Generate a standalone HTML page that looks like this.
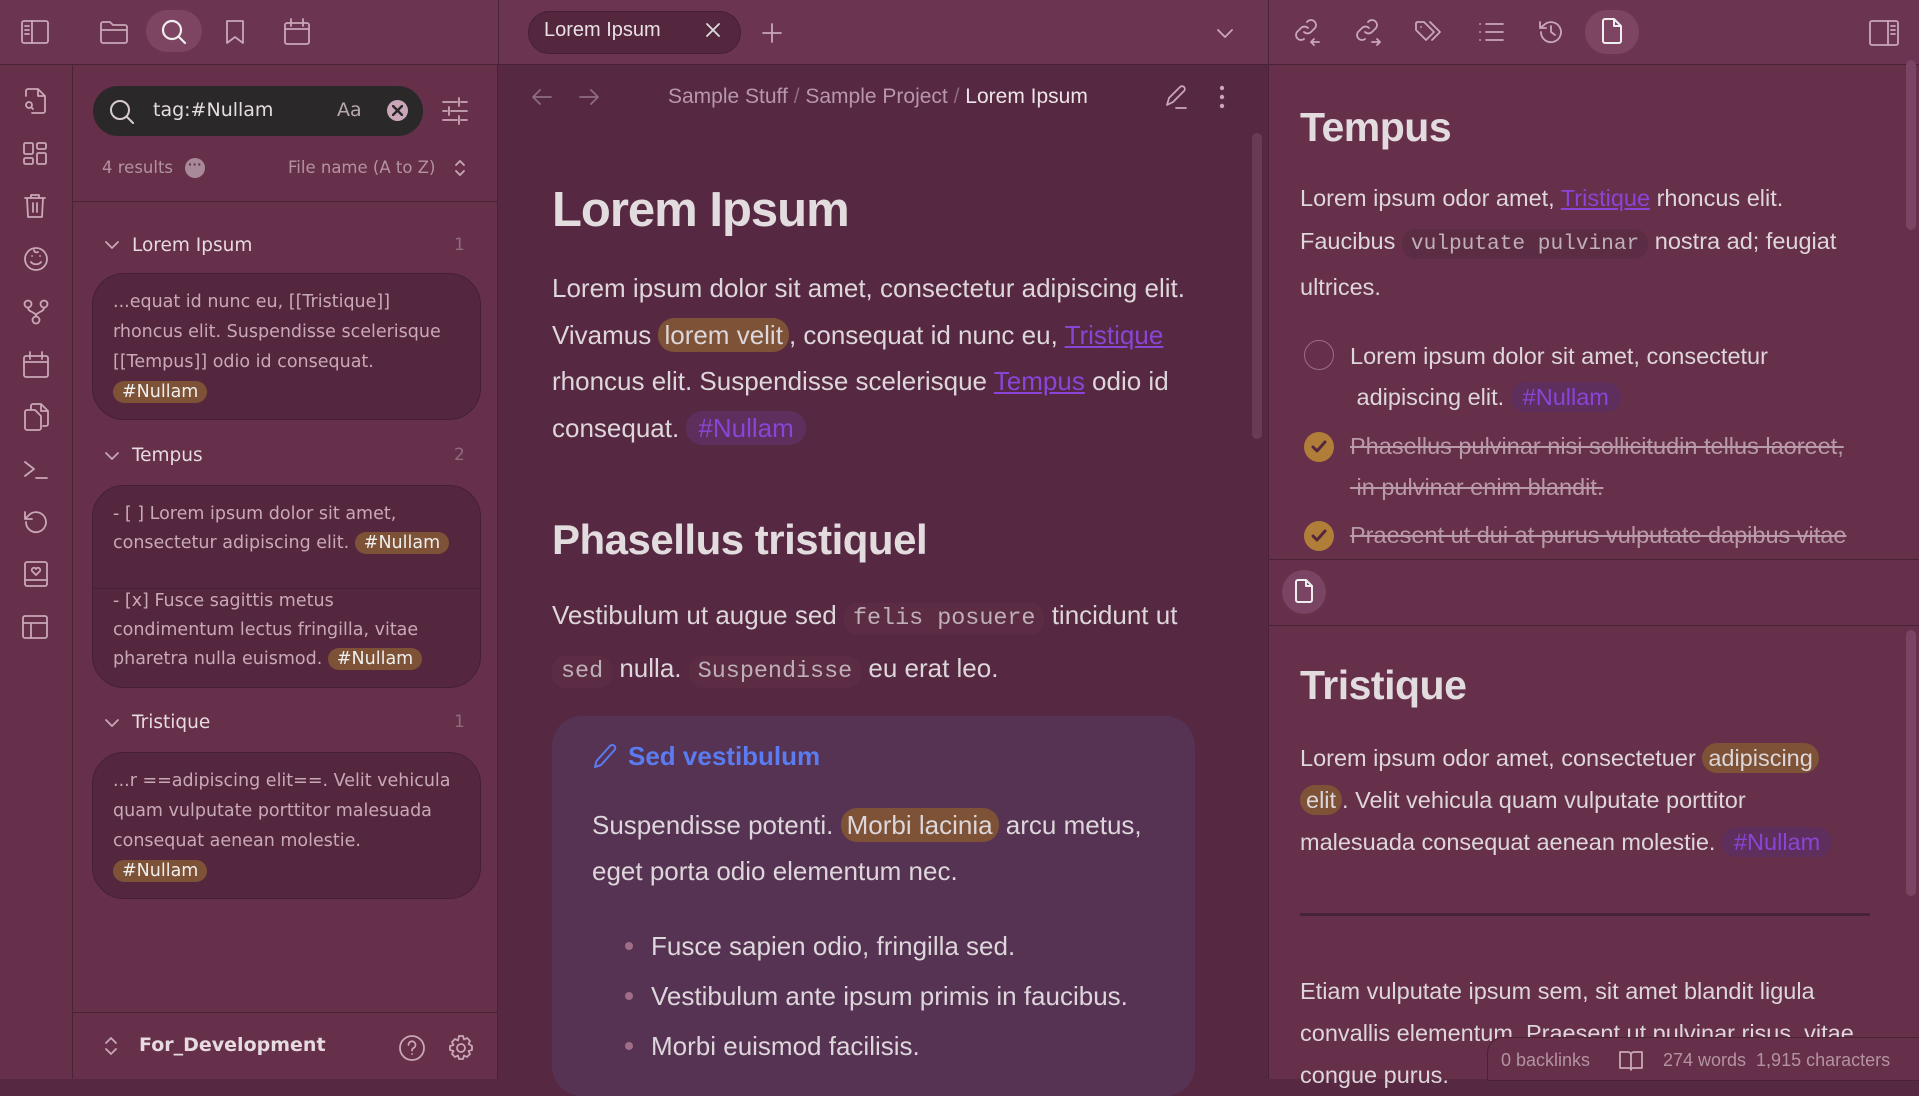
<!DOCTYPE html>
<html><head><meta charset="utf-8"><style>
*{box-sizing:border-box;margin:0;padding:0}
body{width:1919px;height:1079px;overflow:hidden;background:#562841;font-family:"Liberation Sans",sans-serif;color:#ddd6da;position:relative}
.a{position:absolute;white-space:nowrap}
svg{position:absolute;fill:none;stroke:#c9a7b8;stroke-width:1.8;stroke-linecap:round;stroke-linejoin:round}
.sb{font-family:"DejaVu Sans",sans-serif}
.tag{background:#7d5236;color:#eee;border-radius:14px;padding:1px 9px}
.ptag{background:#5e2e5c;color:#8b45d6;border-radius:16px;padding:2px 12px}
.hl{background:#7d5236;border-radius:16px;padding:2px 6px}
.lnk{color:#8b45d6;text-decoration:underline}
.code{font-family:"Liberation Mono",monospace;background:#5c2c44;color:#bfb0b8;border-radius:14px;padding:3px 9px;font-size:0.9em}
.card{position:absolute;left:92px;width:389px;background:#55273f;border:1.5px solid #452034;border-radius:32px}
.ct{position:absolute;left:20px;font-family:"DejaVu Sans",sans-serif;font-size:17.5px;color:#c8a9b8;line-height:30px;white-space:nowrap}
.s{text-decoration:line-through;color:#b89aa8}
</style></head><body>
<div class="a" style="left:0;top:0;width:1919px;height:65px;background:#6b3450;border-bottom:1px solid #4a2236"></div>
<div class="a" style="left:0;top:65px;width:73px;height:1014px;background:#662f4a;border-right:1px solid #4a2236"></div>
<div class="a" style="left:73px;top:65px;width:425px;height:1014px;background:#662f4a;border-right:1px solid #4a2236"></div>
<div class="a" style="left:498px;top:0;width:1px;height:65px;background:#4a2236"></div>
<div class="a" style="left:1268px;top:0;width:1px;height:65px;background:#4a2236"></div>
<div class="a" style="left:1268px;top:65px;width:651px;height:1014px;background:#662f4a;border-left:1px solid #4a2236"></div>

<svg style="left:21px;top:20px" width="28" height="24" viewBox="0 0 28 24"><rect x="1" y="1" width="26" height="22" rx="2"/><path d="M11 1v22M4 6h4M4 10h4M4 14h4"/></svg>
<svg style="left:100px;top:20px" width="28" height="24" viewBox="0 0 28 24"><path d="M1 4a2 2 0 0 1 2-2h7l3 3h12a2 2 0 0 1 2 2v14a2 2 0 0 1-2 2H3a2 2 0 0 1-2-2zM1 10h26"/></svg>
<div class="a" style="left:146px;top:10px;width:56px;height:42px;border-radius:21px;background:#7d4562"></div>
<svg style="left:160px;top:18px;stroke:#eee;stroke-width:2.2" width="28" height="28" viewBox="0 0 28 28"><circle cx="12" cy="12" r="9"/><path d="M19 19l6 6"/></svg>
<svg style="left:225px;top:19px" width="20" height="26" viewBox="0 0 20 26"><path d="M2 2h16v22l-8-6-8 6z"/></svg>
<svg style="left:284px;top:18px" width="26" height="28" viewBox="0 0 26 28"><rect x="1" y="5" width="24" height="21" rx="2"/><path d="M1 11h24M7 1v7M19 1v7"/></svg>

<svg style="left:23px;top:88px" width="24" height="26" viewBox="0 0 24 26"><path d="M3 8V3a2 2 0 0 1 2-2h10l7 7v15a2 2 0 0 1-2 2H9M15 1v7h7"/><circle cx="6" cy="17" r="3"/><path d="M8 19l2 2"/></svg>
<svg style="left:23px;top:142px" width="24" height="24" viewBox="0 0 24 24"><rect x="1" y="1" width="9" height="11" rx="1.5"/><rect x="14" y="1" width="9" height="6" rx="1.5"/><rect x="1" y="16" width="9" height="6" rx="1.5"/><rect x="14" y="11" width="9" height="11" rx="1.5"/></svg>
<svg style="left:24px;top:193px" width="22" height="26" viewBox="0 0 22 26"><path d="M1 5h20M7 5V2h8v3M3 5l1 19h14l1-19M9 10v9M13 10v9"/></svg>
<svg style="left:23px;top:246px" width="26" height="26" viewBox="0 0 26 26"><circle cx="13" cy="13" r="11"/><path d="M8 16c2 3 8 3 10 0M9 10h.1M17 10h.1M11 4c0 2 2 3 4 2"/></svg>
<svg style="left:23px;top:299px" width="26" height="26" viewBox="0 0 26 26"><circle cx="5" cy="5" r="3.5"/><circle cx="21" cy="5" r="3.5"/><circle cx="13" cy="21" r="3.5"/><path d="M5 9c0 4 8 4 8 8M21 9c0 4-8 4-8 8"/></svg>
<svg style="left:23px;top:351px" width="26" height="28" viewBox="0 0 26 28"><rect x="1" y="5" width="24" height="21" rx="2"/><path d="M1 11h24M7 1v7M19 1v7"/></svg>
<svg style="left:23px;top:403px" width="26" height="28" viewBox="0 0 26 28"><path d="M8 6V3a2 2 0 0 1 2-2h8l7 7v13a2 2 0 0 1-2 2h-3M18 1v7h7"/><path d="M2 9a2 2 0 0 1 2-2h8l6 6v12a2 2 0 0 1-2 2H4a2 2 0 0 1-2-2z"/></svg>
<svg style="left:23px;top:459px" width="26" height="22" viewBox="0 0 26 22"><path d="M2 3l9 7-9 7M13 19h11"/></svg>
<svg style="left:22px;top:509px" width="28" height="26" viewBox="0 0 28 26"><path d="M4 13a10 10 0 1 0 3-7L3 10M3 3v7h7"/></svg>
<svg style="left:24px;top:561px" width="24" height="26" viewBox="0 0 24 26"><rect x="1" y="1" width="22" height="24" rx="2"/><path d="M1 19h22M12 14l-4-4a2 2 0 0 1 4-2 2 2 0 0 1 4 2z"/></svg>
<svg style="left:22px;top:615px" width="26" height="24" viewBox="0 0 26 24"><rect x="1" y="1" width="24" height="22" rx="2"/><path d="M1 8h24M9 8v15"/></svg>

<div class="a" style="left:93px;top:86px;width:330px;height:50px;border-radius:25px;background:#2b2829"></div>
<svg style="left:108px;top:98px;stroke:#d8ccd2;stroke-width:2" width="28" height="28" viewBox="0 0 28 28"><circle cx="12" cy="12" r="9"/><path d="M19 19l6 6"/></svg>
<div class="a sb" style="left:153px;top:99px;font-size:19px;color:#e4dde0">tag:#Nullam</div>
<div class="a sb" style="left:337px;top:99px;font-size:19px;color:#b8a8b0">Aa</div>
<div class="a" style="left:387px;top:100px;width:21px;height:21px;border-radius:50%;background:#c9a7b8"></div>
<svg style="left:392px;top:105px;stroke:#2b2829;stroke-width:2.4" width="11" height="11" viewBox="0 0 11 11"><path d="M1 1l9 9M10 1l-9 9"/></svg>
<svg style="left:442px;top:97px" width="26" height="28" viewBox="0 0 26 28"><path d="M1 5h14M19 5h6M17 1v8M1 14h4M9 14h16M7 10v8M1 23h14M19 23h6M17 19v8"/></svg>
<div class="a sb" style="left:102px;top:158px;font-size:16.5px;color:#b393a3">4 results</div>
<div class="a" style="left:185px;top:158px;width:20px;height:20px;border-radius:50%;background:#a8899a;color:#662f4a;font-size:14px;line-height:12px;text-align:center;font-weight:bold">···</div>
<div class="a sb" style="left:288px;top:158px;font-size:16.5px;color:#b393a3">File name (A to Z)</div>
<svg style="left:454px;top:159px" width="12" height="18" viewBox="0 0 12 18"><path d="M2 6l4-4 4 4M2 12l4 4 4-4"/></svg>
<div class="a" style="left:73px;top:201px;width:425px;height:1px;background:#4a2236"></div>

<svg style="left:104px;top:240px" width="16" height="10" viewBox="0 0 16 10"><path d="M2 2l6 6 6-6"/></svg>
<div class="a sb" style="left:132px;top:235px;font-size:18.5px;color:#e6dce0">Lorem Ipsum</div>
<div class="a sb" style="left:454px;top:235px;font-size:17px;color:#8e6c7e">1</div>
<div class="card" style="top:273px;height:147px">
<div class="ct" style="top:13px">...equat id nunc eu, [[Tristique]]<br>rhoncus elit. Suspendisse scelerisque<br>[[Tempus]] odio id consequat.<br><span class="tag">#Nullam</span></div></div>

<svg style="left:104px;top:451px" width="16" height="10" viewBox="0 0 16 10"><path d="M2 2l6 6 6-6"/></svg>
<div class="a sb" style="left:132px;top:445px;font-size:18.5px;color:#e6dce0">Tempus</div>
<div class="a sb" style="left:454px;top:445px;font-size:17px;color:#8e6c7e">2</div>
<div class="card" style="top:485px;height:203px">
<div class="ct" style="top:14px;line-height:29px">- [ ] Lorem ipsum dolor sit amet,<br>consectetur adipiscing elit. <span class="tag">#Nullam</span></div>
<div class="a" style="left:0;top:102px;width:386px;height:1px;background:#452034"></div>
<div class="ct" style="top:101px;line-height:29px">- [x] Fusce sagittis metus<br>condimentum lectus fringilla, vitae<br>pharetra nulla euismod. <span class="tag">#Nullam</span></div></div>

<svg style="left:104px;top:718px" width="16" height="10" viewBox="0 0 16 10"><path d="M2 2l6 6 6-6"/></svg>
<div class="a sb" style="left:132px;top:712px;font-size:18.5px;color:#e6dce0">Tristique</div>
<div class="a sb" style="left:454px;top:712px;font-size:17px;color:#8e6c7e">1</div>
<div class="card" style="top:752px;height:147px">
<div class="ct" style="top:13px">...r ==adipiscing elit==. Velit vehicula<br>quam vulputate porttitor malesuada<br>consequat aenean molestie.<br><span class="tag">#Nullam</span></div></div>

<div class="a" style="left:73px;top:1012px;width:425px;height:1px;background:#4a2236"></div>
<svg style="left:104px;top:1035px" width="14" height="22" viewBox="0 0 14 22"><path d="M2 8l5-5 5 5M2 14l5 5 5-5"/></svg>
<div class="a sb" style="left:139px;top:1034px;font-size:19px;font-weight:bold;color:#e6dce0">For_Development</div>
<svg style="left:398px;top:1034px" width="28" height="28" viewBox="0 0 28 28"><circle cx="14" cy="14" r="12"/><path d="M10.5 11a3.5 3.5 0 1 1 5 3c-1 .6-1.5 1.2-1.5 2.5M14 20h.1"/></svg>
<svg style="left:447px;top:1034px" width="28" height="28" viewBox="0 0 28 28"><circle cx="14" cy="14" r="4"/><path d="M12 2h4l1 3.5 3-1.5 3 3-1.5 3L25 12v4l-3.5 1 1.5 3-3 3-3-1.5L16 25h-4l-1-3.5-3 1.5-3-3 1.5-3L3 16v-4l3.5-1L5 8l3-3 3 1.5z"/></svg>

<div class="a" style="left:528px;top:11px;width:213px;height:43px;border-radius:22px;background:#55273f;border:1.5px solid #452034"></div>
<div class="a" style="left:544px;top:19px;font-size:20px;color:#e8e0e4">Lorem Ipsum</div>
<svg style="left:705px;top:22px;stroke:#ddd" width="16" height="16" viewBox="0 0 16 16"><path d="M2 2l12 12M14 2L2 14"/></svg>
<svg style="left:762px;top:23px" width="20" height="20" viewBox="0 0 20 20"><path d="M10 1v18M1 10h18"/></svg>
<svg style="left:1216px;top:28px" width="18" height="10" viewBox="0 0 18 10"><path d="M2 2l7 7 7-7"/></svg>

<svg style="left:531px;top:88px;stroke:#8e6c7e" width="22" height="18" viewBox="0 0 22 18"><path d="M20 9H2M9 2L2 9l7 7"/></svg>
<svg style="left:578px;top:88px;stroke:#8e6c7e" width="22" height="18" viewBox="0 0 22 18"><path d="M2 9h18M13 2l7 7-7 7"/></svg>
<div class="a" style="left:668px;top:85px;font-size:21px;color:#b898a8">Sample Stuff <span style="color:#8e6c7e">/</span> Sample Project <span style="color:#8e6c7e">/</span> <span style="color:#ece4e8">Lorem Ipsum</span></div>
<svg style="left:1164px;top:84px" width="24" height="26" viewBox="0 0 24 26"><path d="M3 21l2-7L16 3a2.5 2.5 0 0 1 4 4L9 18zM12 24h10"/></svg>
<svg style="left:1218px;top:84px;fill:#c9a7b8;stroke:none" width="8" height="26" viewBox="0 0 8 26"><circle cx="4" cy="4" r="2.2"/><circle cx="4" cy="13" r="2.2"/><circle cx="4" cy="22" r="2.2"/></svg>
<div class="a" style="left:1252px;top:133px;width:10px;height:306px;border-radius:5px;background:#6b3a54"></div>

<div class="a" style="left:552px;top:182px;font-size:49px;font-weight:bold;color:#e2dcdf;letter-spacing:-1px">Lorem Ipsum</div>
<div class="a" style="left:552px;top:265px;font-size:26px;line-height:46.5px">Lorem ipsum dolor sit amet, consectetur adipiscing elit.<br>Vivamus <span class="hl">lorem velit</span>, consequat id nunc eu, <span class="lnk">Tristique</span><br>rhoncus elit. Suspendisse scelerisque <span class="lnk">Tempus</span> odio id<br>consequat. <span class="ptag">#Nullam</span></div>
<div class="a" style="left:552px;top:516px;font-size:42px;font-weight:bold;color:#e2dcdf;letter-spacing:-0.5px">Phasellus tristiquel</div>
<div class="a" style="left:552px;top:591px;font-size:26px;line-height:49px">Vestibulum ut augue sed <span class="code">felis posuere</span> tincidunt ut<br><span class="code">sed</span> nulla. <span class="code">Suspendisse</span> eu erat leo.</div>

<div class="a" style="left:552px;top:716px;width:643px;height:380px;border-radius:30px;background:#563253"></div>
<svg style="left:592px;top:742px;stroke:#5a7cf0;stroke-width:2" width="26" height="28" viewBox="0 0 26 28"><path d="M3 25l1.5-6L18 4a3 3 0 0 1 4.5 4L9 23z"/></svg>
<div class="a" style="left:628px;top:741px;font-size:26px;font-weight:bold;color:#5a7cf0">Sed vestibulum</div>
<div class="a" style="left:592px;top:802px;font-size:26px;line-height:46px">Suspendisse potenti. <span class="hl">Morbi lacinia</span> arcu metus,<br>eget porta odio elementum nec.</div>
<div class="a" style="left:625px;top:942px;width:8px;height:8px;border-radius:50%;background:#a06d86"></div>
<div class="a" style="left:625px;top:992px;width:8px;height:8px;border-radius:50%;background:#a06d86"></div>
<div class="a" style="left:625px;top:1042px;width:8px;height:8px;border-radius:50%;background:#a06d86"></div>
<div class="a" style="left:651px;top:921px;font-size:26px;line-height:50px">Fusce sapien odio, fringilla sed.<br>Vestibulum ante ipsum primis in faucibus.<br>Morbi euismod facilisis.</div>

<svg style="left:1293px;top:18px" width="28" height="28" viewBox="0 0 28 28"><path d="M11 14a5 5 0 0 0 7 0l4-4a5 5 0 0 0-7-7l-1 1M15 10a5 5 0 0 0-7 0l-4 4a5 5 0 0 0 7 7M18 24h8M21 21l-3 3 3 3"/></svg>
<svg style="left:1354px;top:18px" width="28" height="28" viewBox="0 0 28 28"><path d="M11 14a5 5 0 0 0 7 0l4-4a5 5 0 0 0-7-7l-1 1M15 10a5 5 0 0 0-7 0l-4 4a5 5 0 0 0 7 7M18 24h8M23 21l3 3-3 3"/></svg>
<svg style="left:1414px;top:20px" width="30" height="24" viewBox="0 0 30 24"><path d="M2 3v7l10 10 8-8L10 2H3zM16 2l10 10-8 8M7 7h.1"/></svg>
<svg style="left:1478px;top:21px" width="26" height="22" viewBox="0 0 26 22"><path d="M8 3h17M8 11h17M8 19h17M2 3h.1M2 11h.1M2 19h.1"/></svg>
<svg style="left:1537px;top:18px" width="28" height="28" viewBox="0 0 28 28"><path d="M4 14a10 10 0 1 0 3-7L3 10M3 4v6h6M14 8v6l4 3"/></svg>
<div class="a" style="left:1585px;top:10px;width:54px;height:44px;border-radius:22px;background:#7d4562"></div>
<svg style="left:1601px;top:17px;stroke:#f0f0f0;stroke-width:2" width="22" height="28" viewBox="0 0 22 28"><path d="M2 4a2 2 0 0 1 2-2h9l7 7v15a2 2 0 0 1-2 2H4a2 2 0 0 1-2-2zM13 2v7h7"/></svg>
<svg style="left:1869px;top:20px" width="30" height="26" viewBox="0 0 30 26"><rect x="1" y="1" width="28" height="24" rx="2"/><path d="M19 1v24M22 6h4M22 10h4M22 14h4"/></svg>

<div class="a" style="left:1906px;top:60px;width:10px;height:170px;border-radius:5px;background:#7a4562"></div>
<div class="a" style="left:1300px;top:104px;font-size:41px;font-weight:bold;color:#e2dcdf;letter-spacing:-0.5px">Tempus</div>
<div class="a" style="left:1300px;top:177px;font-size:23.5px;line-height:43px">Lorem ipsum odor amet, <span class="lnk">Tristique</span> rhoncus elit.<br>Faucibus <span class="code">vulputate pulvinar</span> nostra ad; feugiat<br>ultrices.</div>
<div class="a" style="left:1304px;top:340px;width:30px;height:30px;border-radius:50%;border:1.5px solid #9a6f86"></div>
<div class="a" style="left:1350px;top:336px;font-size:23.5px;line-height:41px">Lorem ipsum dolor sit amet, consectetur<br>&nbsp;adipiscing elit. <span class="ptag">#Nullam</span></div>
<div class="a" style="left:1304px;top:432px;width:30px;height:30px;border-radius:50%;background:#b07e38"></div>
<svg style="left:1311px;top:440px;stroke:#55273f;stroke-width:3" width="16" height="14" viewBox="0 0 16 14"><path d="M2 7l4 4 8-9"/></svg>
<div class="a s" style="left:1350px;top:426px;font-size:23.5px;line-height:41px">Phasellus pulvinar nisi sollicitudin tellus laoreet,<br>&nbsp;in pulvinar enim blandit.</div>
<div class="a" style="left:1304px;top:521px;width:30px;height:30px;border-radius:50%;background:#b07e38"></div>
<svg style="left:1311px;top:529px;stroke:#55273f;stroke-width:3" width="16" height="14" viewBox="0 0 16 14"><path d="M2 7l4 4 8-9"/></svg>
<div class="a s" style="left:1350px;top:515px;font-size:23.5px;line-height:41px">Praesent ut dui at purus vulputate dapibus vitae</div>
<div class="a" style="left:1269px;top:559px;width:650px;height:67px;background:#662f4a;border-top:1.5px solid #4a2236;border-bottom:1.5px solid #4a2236"></div>
<div class="a" style="left:1282px;top:570px;width:44px;height:44px;border-radius:22px;background:#7a4562"></div>
<svg style="left:1294px;top:578px;stroke:#eee;stroke-width:2" width="20" height="26" viewBox="0 0 20 26"><path d="M2 4a2 2 0 0 1 2-2h8l6 6v14a2 2 0 0 1-2 2H4a2 2 0 0 1-2-2zM12 2v6h6"/></svg>

<div class="a" style="left:1906px;top:630px;width:10px;height:266px;border-radius:5px;background:#7a4562"></div>
<div class="a" style="left:1300px;top:662px;font-size:41px;font-weight:bold;color:#e2dcdf;letter-spacing:-0.5px">Tristique</div>
<div class="a" style="left:1300px;top:737px;font-size:23.5px;line-height:42px">Lorem ipsum odor amet, consectetuer <span class="hl">adipiscing</span><br><span class="hl">elit</span>. Velit vehicula quam vulputate porttitor<br>malesuada consequat aenean molestie. <span class="ptag">#Nullam</span></div>
<div class="a" style="left:1300px;top:913px;width:570px;height:3px;background:#47233a"></div>
<div class="a" style="left:1300px;top:970px;font-size:23.5px;line-height:42px">Etiam vulputate ipsum sem, sit amet blandit ligula<br>convallis elementum. Praesent ut pulvinar risus, vitae<br>congue purus.</div>

<div class="a" style="left:1487px;top:1037px;width:434px;height:44px;background:#662f4a;border:1.5px solid #4a2236;border-top-left-radius:16px"></div>
<div class="a" style="left:1501px;top:1050px;font-size:18px;color:#b393a3">0 backlinks</div>
<svg style="left:1619px;top:1050px" width="24" height="22" viewBox="0 0 24 22"><path d="M1 2h8a3 3 0 0 1 3 3v15a2 2 0 0 0-2-2H1zM23 2h-8a3 3 0 0 0-3 3v15a2 2 0 0 1 2-2h9z"/></svg>
<div class="a" style="left:1663px;top:1050px;font-size:18px;color:#b393a3">274 words&nbsp; 1,915 characters</div>
</body></html>
